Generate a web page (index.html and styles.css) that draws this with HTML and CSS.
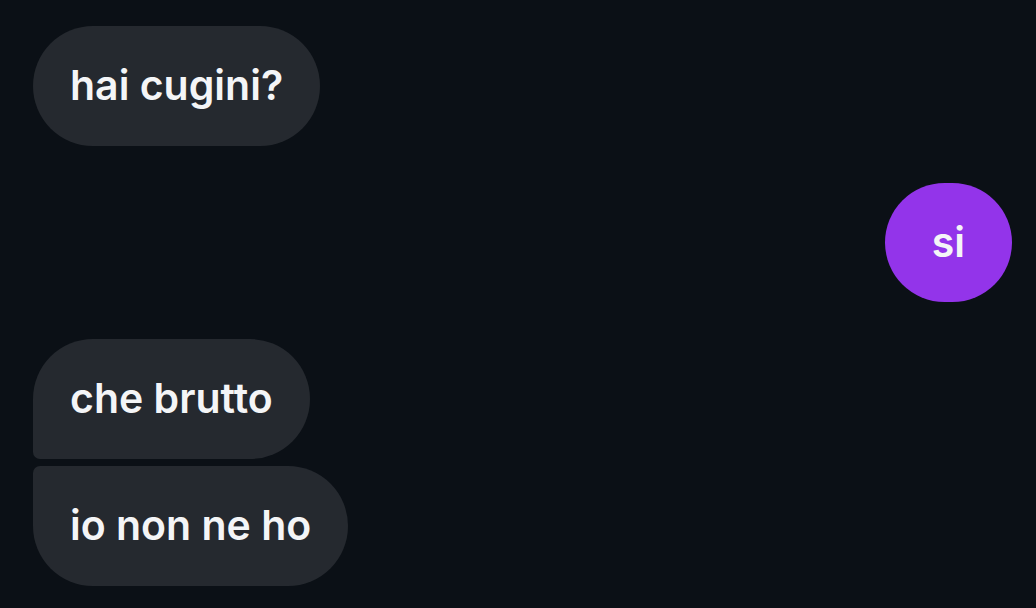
FILE: index.html
```html
<!DOCTYPE html>
<html lang="it">
<head>
<meta charset="utf-8">
<title>Chat</title>
<link rel="stylesheet" href="styles.css">
</head>
<body>
<div class="chat">
  <div class="row in"><div class="bubble">hai cugini?</div></div>
  <div class="row out"><div class="bubble me">si</div></div>
  <div class="group">
    <div class="row in"><div class="bubble first">che brutto</div></div>
    <div class="row in"><div class="bubble last">io non ne ho</div></div>
  </div>
</div>
</body>
</html>
```
FILE: styles.css
```css
html, body {
  margin: 0;
  padding: 0;
  background: #0b1016;
  height: 100%;
}
body {
  font-family: Inter, Roboto, "Noto Sans", sans-serif;
}
.chat {
  display: flex;
  flex-direction: column;
  gap: 37px;
  padding: 26px 24px 23px 33px;
}
.group {
  display: flex;
  flex-direction: column;
  gap: 7px;
}
.row {
  display: flex;
}
.row.out {
  justify-content: flex-end;
}
.bubble {
  background: #25292f;
  color: #f4f5f7;
  font-size: 41px;
  font-weight: 600;
  line-height: 48px;
  padding: 35px 37px 37px;
  border-radius: 60px;
}
.bubble.me {
  background: #9334ea;
  min-width: 30px;
  text-align: center;
  padding: 35px 47px 36px;
}
.bubble.first {
  border-bottom-left-radius: 7px;
}
.bubble.last {
  border-top-left-radius: 7px;
}
```
